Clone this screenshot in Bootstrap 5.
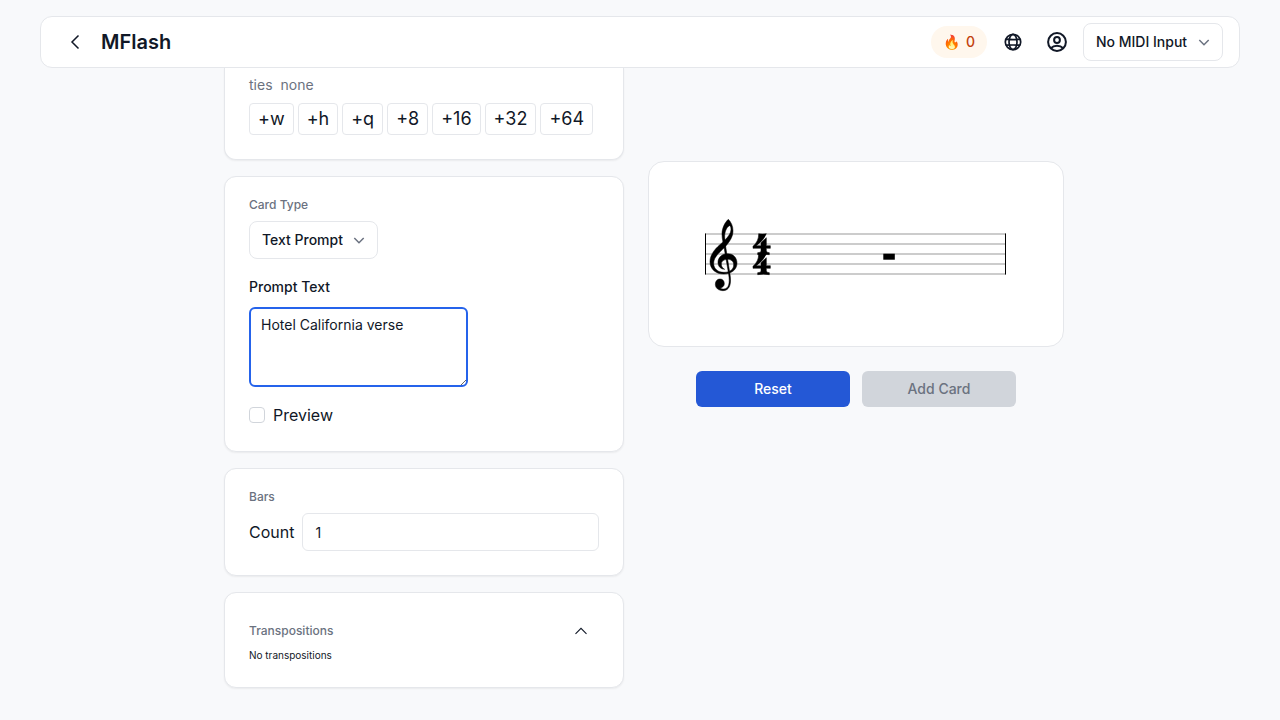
<!DOCTYPE html>
<html lang="en">
<head>
<meta charset="utf-8">
<meta name="viewport" content="width=device-width, initial-scale=1">
<title>MFlash</title>
<link href="https://cdn.jsdelivr.net/npm/bootstrap@5.3.0/dist/css/bootstrap.min.css" rel="stylesheet">
<style>
  :root { --line: #e5e7eb; --ink: #111827; --muted: #6b7280; }
  body { font-family: Inter, "Liberation Sans", sans-serif; font-size: 16px; line-height: 24px; color: var(--ink); background: #f8f9fb; }
  .topbar { margin: 16px 40px 0; height: 52px; padding: 0 16px; background: #fff; border: 1px solid var(--line); border-radius: 12px; }
  .brand { font-size: 20px; line-height: 28px; font-weight: 600; }
  .icon-btn { width: 36px; height: 36px; padding: 0; border: 0; background: none; color: var(--ink); display: flex; align-items: center; justify-content: center; }
  .streak { height: 32px; padding: 0 12px; border-radius: 16px; background: #fff7ed; color: #c2410c; font-size: 14px; font-weight: 500; gap: 6px; }
  .picker { width: auto; height: 38px; padding: 8px 34px 8px 12px; border: 1px solid var(--line); border-radius: 8px; font-size: 14px; line-height: 20px; font-weight: 500; color: var(--ink); background-color: #fff;
    background-image: url("data:image/svg+xml,%3Csvg xmlns='http://www.w3.org/2000/svg' viewBox='0 0 16 16' fill='none' stroke='%236b7280' stroke-width='1.500'%3E%3Cpath d='M3.300 6l4.700 4.700L12.700 6'/%3E%3C/svg%3E");
    background-size: 16px 16px; background-position: right 10px center; }
  .workspace { max-width: 896px; padding: 0 24px 32px 32px; gap: 24px; }
  .editor { flex: 0 1 400px; gap: 16px; }
  .preview-pane { flex: 1 1 0; padding-top: 93px; }
  .panel { background: #fff; border: 1px solid var(--line); border-radius: 12px; padding: 20px 24px 24px; box-shadow: 0 1px 2px rgba(0,0,0,.06); }
  .panel-tucked { border-top: 0; border-radius: 0 0 12px 12px; padding-top: 7px; }
  .ties { font-size: 14px; line-height: 20px; color: var(--muted); }
  .note-btn { height: 32px; padding: 0 8px; background: #fff; border: 1px solid var(--line); border-radius: 4px; font-size: 18px; line-height: 28px; color: var(--ink); }
  .section-name { font-size: 12px; line-height: 16px; font-weight: 500; color: var(--muted); }
  .field-name { font-size: 14px; font-weight: 500; }
  .prompt-box { width: 219px; height: 80px; padding: 8px 12px; border: 0; outline: 2px solid #2563eb; outline-offset: -2px; border-radius: 6px; font-size: 14px; line-height: 20px; color: var(--ink); resize: both; }
  .tick { width: 16px; height: 16px; margin: 0; border: 1px solid #d1d5db; }
  .count-box { height: 38px; padding: 8px 12px; border: 1px solid var(--line); border-radius: 6px; font-size: 14px; line-height: 20px; color: var(--ink); }
  .tiny { font-size: 10px; line-height: 12px; padding-bottom: 2px; }
  .score { background: #fff; border: 1px solid var(--line); border-radius: 16px; padding: 56px; }
  .score svg { display: block; width: 100%; height: 72px; overflow: visible; }
  .actions { gap: 12px; padding: 24px 48px 0; }
  .action { height: 36px; padding: 8px 0; border: 0; border-radius: 6px; font-size: 14px; line-height: 20px; font-weight: 500; flex: 1 1 0; }
  .action-main, .action-main:hover { background: #2458d6; color: #fff; }
  .action:disabled { background: #d1d5db; color: var(--muted); opacity: 1; }
</style>
</head>
<body>
<header class="topbar d-flex align-items-center justify-content-between sticky-top">
  <div class="d-flex align-items-center gap-2">
    <button type="button" class="icon-btn" aria-label="Back">
      <svg width="16" height="16" viewBox="0 0 16 16" fill="none" stroke="currentColor" stroke-width="1.5"><path d="M11.5 1.5L5 8l6.500 6.500"/></svg>
    </button>
    <h1 class="brand mb-0">MFlash</h1>
  </div>
  <div class="d-flex align-items-center gap-2">
    <div class="streak d-flex align-items-center"><span>🔥</span><span>0</span></div>
    <button type="button" class="icon-btn" aria-label="Language">
      <svg width="18" height="18" viewBox="0 0 18 18" fill="none" stroke="currentColor" stroke-width="1.700"><circle cx="9" cy="9" r="7.700"/><ellipse cx="9" cy="9" rx="4" ry="7.700"/><path d="M1.800 6.200Q9 7.200 16.200 6.200M1.800 12.200Q9 11.800 16.200 12.200" /></svg>
    </button>
    <button type="button" class="icon-btn" aria-label="Account">
      <svg width="20" height="20" viewBox="0 0 20 20" fill="none" stroke="currentColor" stroke-width="2"><circle cx="10" cy="10" r="8.900"/><circle cx="10" cy="8" r="2.900"/><path d="M3.800 16.200C7 13 13 13 16.200 16.200"/></svg>
    </button>
    <select class="form-select picker" aria-label="MIDI input"><option>No MIDI Input</option></select>
  </div>
</header>

<main class="workspace d-flex align-items-start mx-auto">
  <div class="editor d-flex flex-column">
    <section class="panel panel-tucked">
      <div class="ties d-flex gap-2 mb-2"><span>ties</span><span>none</span></div>
      <div class="d-flex gap-1">
        <button type="button" class="note-btn">+w</button>
        <button type="button" class="note-btn">+h</button>
        <button type="button" class="note-btn">+q</button>
        <button type="button" class="note-btn">+8</button>
        <button type="button" class="note-btn">+16</button>
        <button type="button" class="note-btn">+32</button>
        <button type="button" class="note-btn">+64</button>
      </div>
    </section>

    <section class="panel">
      <label class="section-name d-block mb-2" for="cardType">Card Type</label>
      <select id="cardType" class="form-select picker mb-3"><option>Text Prompt</option></select>
      <label class="field-name d-block mb-2" for="promptText">Prompt Text</label>
      <textarea id="promptText" class="prompt-box d-block mb-3">Hotel California verse</textarea>
      <div class="d-flex align-items-center gap-2">
        <input id="preview" type="checkbox" class="form-check-input tick">
        <label for="preview">Preview</label>
      </div>
    </section>

    <section class="panel">
      <h2 class="section-name mb-2">Bars</h2>
      <div class="d-flex align-items-center gap-2">
        <label for="count">Count</label>
        <input id="count" type="text" inputmode="numeric" class="form-control count-box" value="1">
      </div>
    </section>

    <section class="panel">
      <div class="d-flex align-items-center justify-content-between">
        <h2 class="section-name mb-0">Transpositions</h2>
        <button type="button" class="icon-btn" aria-label="Collapse transpositions">
          <svg width="16" height="16" viewBox="0 0 16 16" fill="none" stroke="currentColor" stroke-width="1.100"><path d="M2.500 10.800L8 5.300l5.500 5.500"/></svg>
        </button>
      </div>
      <p class="tiny mb-0">No transpositions</p>
    </section>
  </div>

  <div class="preview-pane">
    <div class="score">
      <svg viewBox="0 0 302 72" role="img" aria-label="One empty bar in four-four time">
        <!-- staff -->
        <path d="M0 16H301M0 26H301M0 36H301M0 46H301M0 56H301" stroke="#999" fill="none"/>
        <path d="M.5 15.500V56.500M300.500 15.500V56.500" stroke="#000" fill="none"/>
        <rect x="178.300" y="35.700" width="11.500" height="6" />
        <!-- clef and time signature, drawn on a grid three times finer -->
        <g transform="translate(-5 -8) scale(.33333)" stroke="#000" stroke-width="1.500">
          <path fill-rule="evenodd" d="M85 28C93 36 99 48 99 62C99 82 88 96 74 112C57 130 41 141 41 160C41 177 54 187 72 187C90 187 101 178 101 164C101 154 93 148 82 148C72 148 64 154 64 162C64 169 67 174 74 178C62 178 54 169 54 157C54 142 66 131 83 131C100 131 111 143 111 160C111 179 94 192 71 192C47 192 30 177 30 155C30 132 48 113 69 96C67 88 66 80 66 72C66 55 74 38 85 28ZM88 47C80 51 73 67 74 82L75 90C84 81 93 70 93 58C93 51 91 47 88 47Z"/>
          <path d="M69 94L74 90L90 193C95 222 89 242 69 242C55 242 46 234 46 223C46 213 52 207 60 207C68 207 73 213 73 221C73 228 68 232 61 234C64 237 68 238 72 237C87 236 90 218 86 193Z"/>
          <g id="four">
            <path fill-rule="evenodd" d="M176 71Q187 73 199 71Q192 91 169 107H183V98L199 83V107H211V115H199V123Q200 128 208 128V134Q190 131 173 134V128Q183 128 183 123V115H159V109Q177 92 176 71Z"/>
          </g>
          <use href="#four" y="60"/>
          <path d="M178 131H199L190 143H177Z"/>
        </g>
      </svg>
    </div>
    <div class="actions d-flex">
      <button type="button" class="btn action action-main">Reset</button>
      <button type="button" class="btn action" disabled>Add Card</button>
    </div>
  </div>
</main>
<script src="https://cdn.jsdelivr.net/npm/bootstrap@5.3.0/dist/js/bootstrap.bundle.min.js"></script>
</body>
</html>
